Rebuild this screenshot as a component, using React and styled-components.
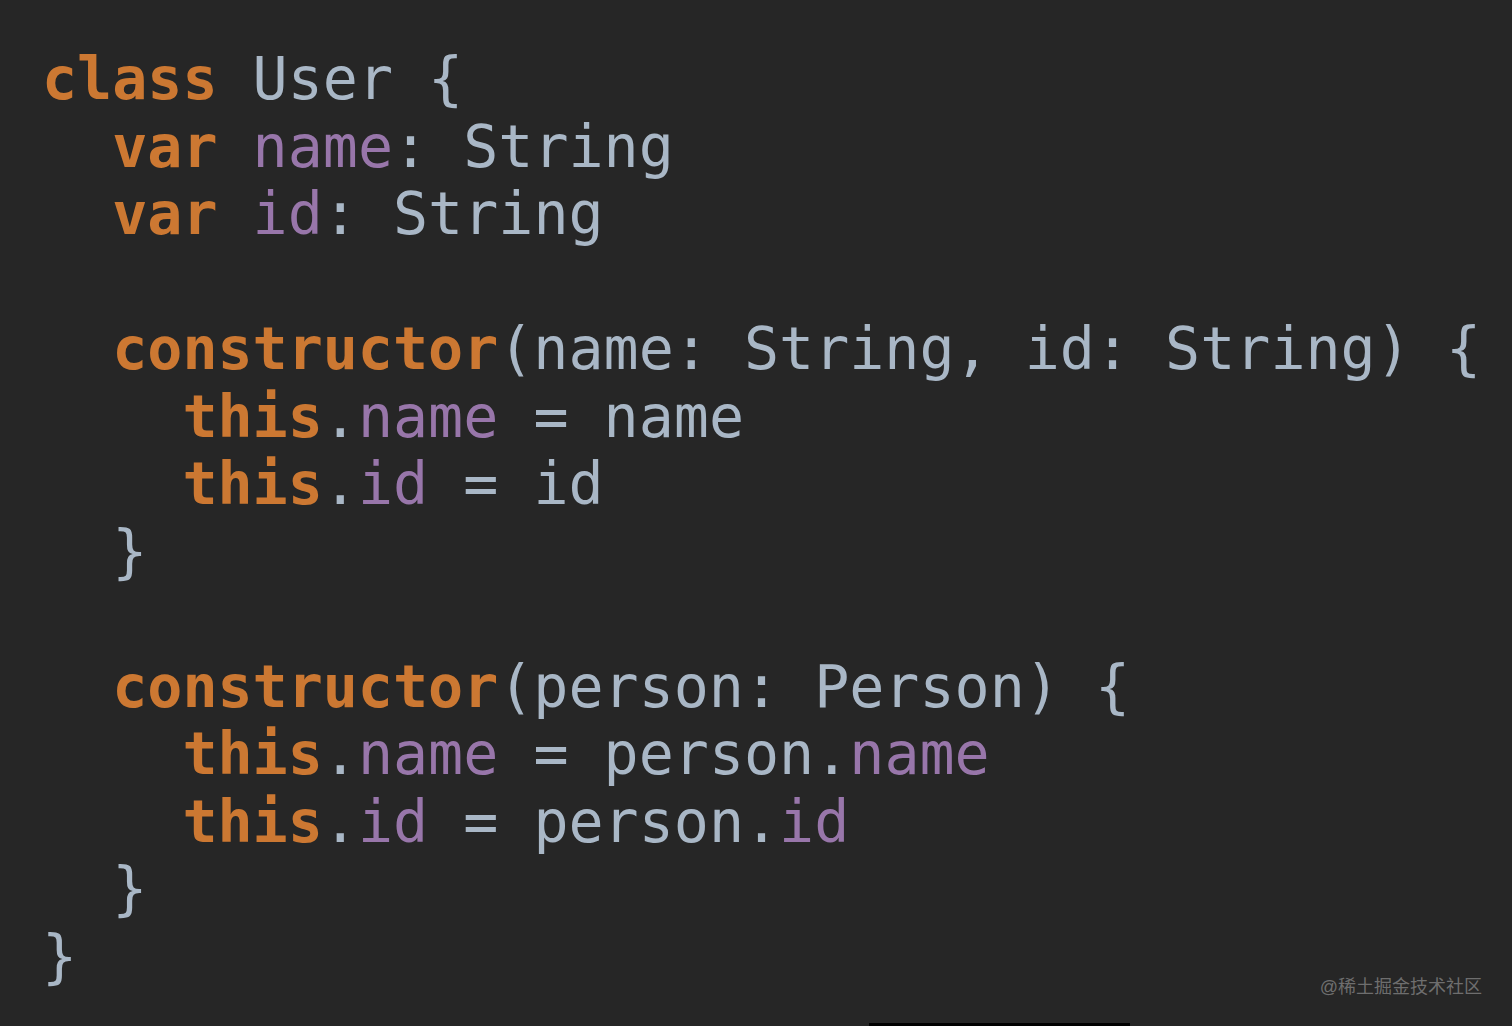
import React from "react";
import styled, { createGlobalStyle } from "styled-components";

const Global = createGlobalStyle`
  html, body { margin: 0; padding: 0; background: #262626; }
  body { width: 1512px; height: 1026px; overflow: hidden; }
`;

const Screen = styled.div`
  position: relative;
  width: 1512px;
  height: 1026px;
  background: #262626;
  box-sizing: border-box;
  padding: 46px 0 0 42px;
`;

const Code = styled.pre`
  margin: 0;
  font-family: "DejaVu Sans Mono", monospace;
  font-size: 58.3px;
  line-height: 67.5px;
  color: #a9b7c6;
  white-space: pre;
`;

const Line = styled.div`
  height: 67.5px;
  padding-left: ${(p) => (p.$indent || 0)}ch;
`;

const Kw = styled.span`
  color: #cc7832;
  font-weight: bold;
`;

const Field = styled.span`
  color: #9876aa;
`;

const Watermark = styled.div`
  position: absolute;
  right: 30px;
  bottom: 28px;
  font-family: "Liberation Sans", "Noto Sans CJK SC", sans-serif;
  font-size: 18px;
  color: rgba(160, 160, 160, 0.6);
`;

const Bar = styled.div`
  position: absolute;
  left: 869px;
  bottom: 0;
  width: 261px;
  height: 3px;
  background: #000;
`;

export default function App() {
  return (
    <Screen>
      <Global />
      <Code>
        <Line><Kw>class</Kw> User {"{"}</Line>
        <Line $indent={2}><Kw>var</Kw> <Field>name</Field>: String</Line>
        <Line $indent={2}><Kw>var</Kw> <Field>id</Field>: String</Line>
        <Line />
        <Line $indent={2}><Kw>constructor</Kw>(name: String, id: String) {"{"}</Line>
        <Line $indent={4}><Kw>this</Kw>.<Field>name</Field> = name</Line>
        <Line $indent={4}><Kw>this</Kw>.<Field>id</Field> = id</Line>
        <Line $indent={2}>{"}"}</Line>
        <Line />
        <Line $indent={2}><Kw>constructor</Kw>(person: Person) {"{"}</Line>
        <Line $indent={4}><Kw>this</Kw>.<Field>name</Field> = person.<Field>name</Field></Line>
        <Line $indent={4}><Kw>this</Kw>.<Field>id</Field> = person.<Field>id</Field></Line>
        <Line $indent={2}>{"}"}</Line>
        <Line>{"}"}</Line>
      </Code>
      <Watermark>@稀土掘金技术社区</Watermark>
      <Bar />
    </Screen>
  );
}
